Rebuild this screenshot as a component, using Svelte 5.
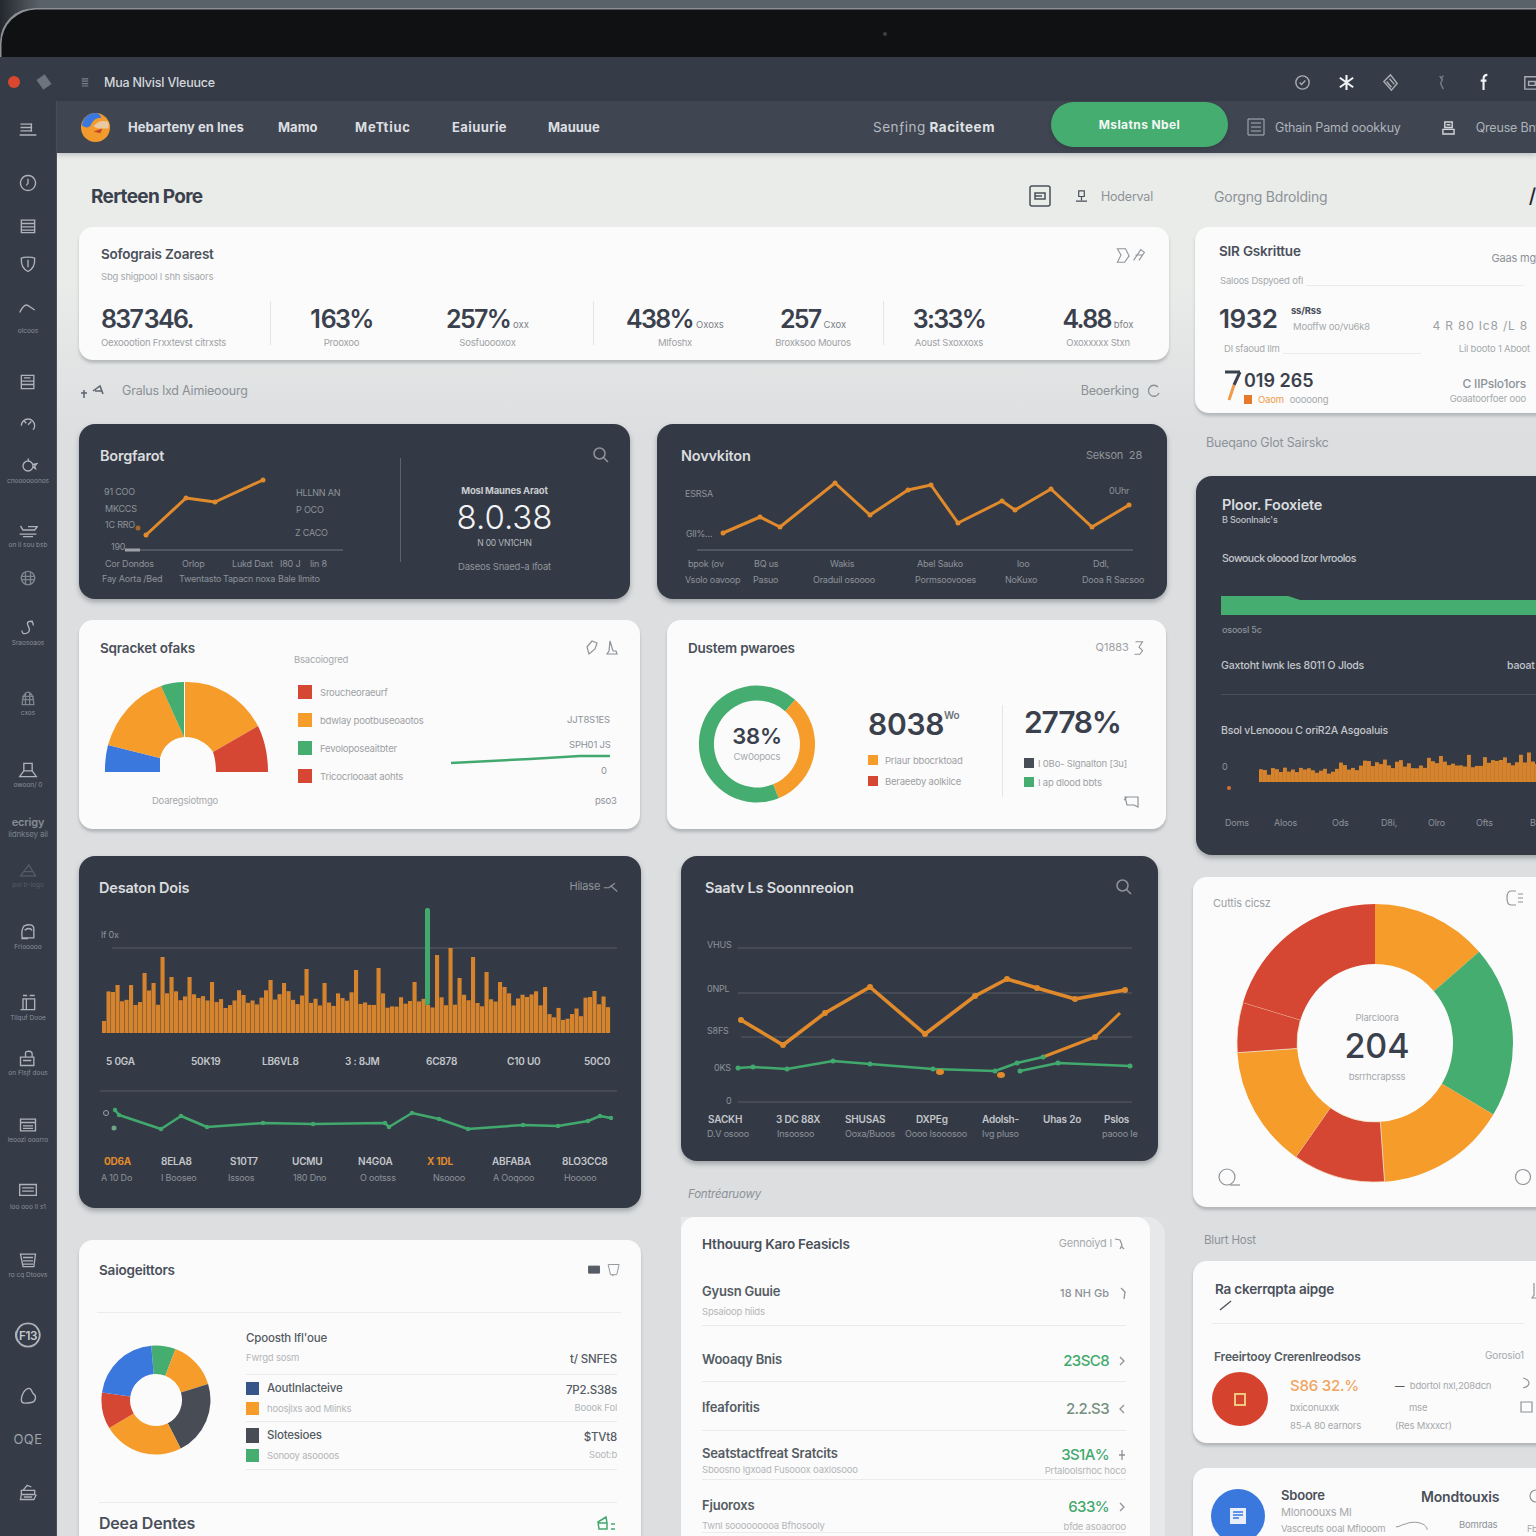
<script>
	// sidebar rail, in order from the top
	const rail = [
		{ d: 'M3 5h14M3 9h14M3 13h14M2 18h20M16 4v10' },
		{ d: 'M12 3a9 9 0 1 0 .01 0zM12 7v5l-2 3' },
		{ d: 'M4 5h16v15H4zM4 9h16M4 13h16M4 17h16' },
		{ d: 'M4 5c3-1.6 13-1.6 16 0 .5 8-2 13-8 16-6-3-8.5-8-8-16zM12 7v9' },
		{ d: 'M2 15c3-6 6-9 8-9 2 0 5 3 10 6', label: 'olcoos', low: true },
		{ d: 'M4 4h15v7H4zM4 11h15v9H4zM4 15h15M7 7h8' },
		{ d: 'M4 14a8 8 0 1 1 16 0c0 2-1 4-2 5M12 13l4-4M7 8l3 3' },
		{ d: 'M6 12a6 6 0 1 0 12 0 6 6 0 0 0-12 0zM12 3l1 3M18 10l5-1-3 3 1 3-3-2', label: 'cnoooooonos' },
		{ d: 'M3 7l3 5h14l3-4H12M2 17h20M6 20h12', label: 'on ii sou bsb' },
		{ d: 'M12 4a8 8 0 1 0 .01 0zM5 10h14M5 14h14M9 5v14M15 5v14', dim: true },
		{ d: 'M18 4c-5-1-8 1-6 5s3 7-1 9-7 0-6-3M14 4c3 0 5 2 4 5', label: 'Sraosoaos' },
		{ d: 'M5 20c0-9 3-15 7-15s7 6 7 15zM5 14h14M5 10h14M9 6v14M14 6v14', label: 'cxos', dim: true },
		{ d: 'M7 4h10v9l5 7H2l5-7zM7 13h10', label: 'owoon/ 0' },
		{ text: 'ecrigy', sub: 'lidnksey ail' },
		{ d: 'M3 19L13 6l8 13zM7 14h10', label: 'pol b-logo', faint: true },
		{ d: 'M7 5c6-3 12-2 12 3v11H5c-1-6 0-11 2-14zM4 20h8M8 10c3-3 7-3 9 0', label: 'Friooooo' },
		{ d: 'M6 7h14v13H6zM10 7v13M6 3h5M14 3h6M3 20h3', label: 'Tilquf Dooe' },
		{ d: 'M3 11h16v10H3zM9 11V6c0-3 8-3 8 1v4M6 15h10', label: 'on Flsjf dous' },
		{ d: 'M3 5h18v14H3zM3 9h18M6 13h12M6 16h12', label: 'leoozi ooorro' },
		{ d: 'M2 3h20v13H2zM5 7h14M5 11h14', label: 'loo ooo Il s1' },
		{ d: 'M3 5h18l-2 15H6zM6 9h12M6 13h12M6 17h12', label: 'ro cq Dtoovs' },
		{ d: 'M12 2a10 10 0 1 0 .01 0zM2 9c-1 4 0 7 2 9', num: 'F13' },
		{ d: 'M4 18c0-7 5-14 9-14s3 5 6 7 3 9-3 10-12 2-12-3z' },
		{ text: 'OQE' },
		{ d: 'M4 10h16v5H4zM4 15l-1 6h16l3-6M6 10l5-6 5 2M7 18h10' }
	];

	const stats = [
		{ v: '837 346.', l: 'Oexoootion Frxxtevst citrxsts', left: true },
		{ sep: true },
		{ v: '1 63%', l: 'Prooxoo' },
		{ v: '257%', s: 'oxx', l: 'Sosfuoooxox' },
		{ blank: true },
		{ sep: true },
		{ v: '438%', s: 'Oxoxs', l: 'Mlfoshx' },
		{ v: '257', s: 'Cxox', l: 'Broxksoo Mouros' },
		{ blank: true },
		{ sep: true },
		{ v: '3:33%', l: 'Aoust Sxoxxoxs' },
		{ blank: true },
		{ v: '4.88', s: 'bfox', l: 'Oxoxxxxx Stxn' }
	];

	const orange = '#e08a2c';
	const green = '#42a96e';

	const lineA = [[146, 535], [186, 498], [215, 502], [263, 480]];
	const lineB = [[723, 533], [760, 517], [780, 527], [835, 483], [870, 515], [908, 490], [931, 485], [958, 523], [1002, 501], [1015, 510], [1051, 489], [1092, 527], [1129, 505]];
	const lineE = [[115, 1110], [119, 1115], [161, 1129], [181, 1116], [207, 1127], [263, 1123], [313, 1124], [385, 1123], [389, 1127], [412, 1113], [439, 1119], [468, 1129], [523, 1125], [558, 1126], [588, 1121], [600, 1116], [611, 1118]];
	const lineF1 = [[741, 1020], [783, 1045], [825, 1013], [870, 987], [925, 1034], [975, 996], [1007, 979], [1037, 988], [1075, 999], [1125, 990]];
	const lineF2 = [[1043, 1057], [1095, 1037], [1120, 1013]];
	const lineF3 = [[738, 1068], [753, 1067], [787, 1069], [833, 1061], [870, 1064], [933, 1069], [995, 1071], [1017, 1063], [1043, 1057]];
	const lineF4 = [[1020, 1071], [1058, 1063], [1130, 1066]];

	const pts = (list) => list.map((p) => p.join(',')).join(' ');

	function rand(i) {
		const s = Math.sin(i * 12.9898) * 43758.5453;
		return s - Math.floor(s);
	}

	// tall bars of the big histogram: page x, top y
	const peaks = [[160, 957], [144, 973], [188, 977], [211, 982], [269, 980], [283, 983], [304, 969], [324, 983], [353, 970], [378, 968], [414, 982], [435, 955], [447, 948], [472, 957], [484, 972], [498, 982], [523, 997], [542, 987], [588, 997], [609, 982], [110, 992], [115, 985], [131, 985], [152, 983], [169, 977], [458, 978], [504, 987]];
	const barsE = [];
	for (let i = 0; i < 113; i++) {
		const x = 102 + i * 4.5;
		let h = 25 + rand(i) * 18;
		if (x > 540 && x < 580) h = 12 + rand(i) * 14;
		if (i === 0) h = 12;
		for (const p of peaks) if (Math.abs(p[0] - x) < 2.3) h = 1033 - p[1];
		barsE.push({ x, h });
	}
	const barsJ = [];
	for (let i = 3; i < 73; i++) {
		const x = 1247 + i * 4;
		barsJ.push({ x, h: 5 + i * 0.17 + rand(i + 7) * (7 + i * 0.16) });
	}

	function sector(cx, cy, rx, ry, irx, iry, a0, a1) {
		const p = (a, x, y) => {
			const t = ((a - 90) * Math.PI) / 180;
			return `${(cx + x * Math.cos(t)).toFixed(1)} ${(cy + y * Math.sin(t)).toFixed(1)}`;
		};
		const big = a1 - a0 > 180 ? 1 : 0;
		return `M${p(a0, rx, ry)}A${rx} ${ry} 0 ${big} 1 ${p(a1, rx, ry)}L${p(a1, irx, iry)}A${irx} ${iry} 0 ${big} 0 ${p(a0, irx, iry)}Z`;
	}

	const c = { o: '#f59c2a', r: '#d64733', g: '#45ad70', b: '#3a78de', d: '#474c55' };
	const donutD = [[0, 41, c.g], [41, 158, c.o], [158, 360, c.g]];
	const donutG = [[-5, 21, c.g], [21, 73, c.o], [73, 153, c.d], [153, 239, c.o], [239, 278, c.r], [278, 355, c.b]];
	const donutK = [[0, 49, c.o], [49, 121, c.g], [121, 176, c.o], [176, 215, c.r], [215, 266, c.o], [266, 287, c.r], [287, 360, c.r]];

	const legendC = [
		[c.r, 'Sroucheoraeurf'],
		[c.o, 'bdwlay pootbuseoaotos'],
		[c.g, 'Fevoloposeaitbter'],
		[c.r, 'Tricocrlooaat aohts']
	];

	const rows = [
		{ t: 'Gyusn Guuie', s: 'Spsaioop hiids', v: '18 NH Gb', plain: true, ch: 'M3 1l4 4-1 7', h: 60, pt: 16, sg: 6 },
		{ t: 'Wooaqy Bnis', v: '23SC8', ch: 'M2 2l4 4-4 4', h: 56, pt: 24 },
		{ t: 'lfeaforitis', v: '2.2.S3', muted: true, ch: 'M6 2L2 6l4 4', h: 49, pt: 16 },
		{ t: 'Seatstactfreat Sratcits', s: 'Sboosno lgxoad Fusooox oaxlosooo', v: '3S1A%', vs: 'Prtaloolsrhoc hoco', ch: 'M4 1v10M1 6h6', h: 49, pt: 13, sg: 2 },
		{ t: 'Fjuoroxs', s: 'Twnl sooooooooa Bfhosooly', v: '633%', vs: 'bfde asoaoroo', ch: 'M2 2l4 4-4 4', h: 53, pt: 16, sg: 6 }
	];
</script>

{#snippet labels(list, cls)}
	{#each list as [x, y, t]}
		<text {x} {y} class={cls}>{t}</text>
	{/each}
{/snippet}

{#snippet loupe()}
	<svg class="ico" viewBox="0 0 18 18"><circle cx="7.5" cy="7.5" r="5.5" /><path d="M11.5 11.5L16 16" /></svg>
{/snippet}

<div class="page">
	<div class="bezel">
		<div class="glass"><i class="cam"></i></div>
	</div>

	<div class="titlebar">
		<i class="dot"></i>
		<i class="chip"></i>
		<svg class="tb-ic" viewBox="0 0 10 12"><path d="M1 2h8M1 5h8M1 8h8M1 11h8" /></svg>
		<span class="tb-title">Mua Nlvisl Vleuuce</span>
		<div class="tb-right">
			<svg viewBox="0 0 20 20"><circle cx="10" cy="10" r="7" /><path d="M7 10l2 2 4-4" /></svg>
			<svg class="bright" viewBox="0 0 20 20"><path d="M10 2v16M3 5l14 10M17 5L3 15" /></svg>
			<svg viewBox="0 0 20 20"><path d="M3 9l7-7 7 9-6 7zM6 9l5 6M9 6l5 6" /></svg>
			<svg class="dimmer" viewBox="0 0 20 20"><path d="M8 3l3 4-2 4 3 6M12 3l-3 3" /></svg>
			<svg class="bright" viewBox="0 0 20 20"><path d="M13 2c-3 0-4 1-4 4v12M6 8h6" /></svg>
			<svg viewBox="0 0 20 20"><path d="M4 4h14v13H4zM8 9h7v4H8z" /></svg>
		</div>
	</div>

	<div class="shell">
		<aside class="rail">
			{#each rail as it}
				<div class="rail-item" class:dim={it.dim} class:faint={it.faint} class:low={it.low}>
					{#if it.text}
						<span class="rail-text" class:oqe={!it.sub}>{it.text}</span>
						{#if it.sub}<span class="rail-sub">{it.sub}</span>{/if}
					{:else}
						<svg viewBox="0 0 24 24" class:big={it.num}>
							<path d={it.d} />
							{#if it.num}<text x="12" y="16" class="rail-num">{it.num}</text>{/if}
						</svg>
						{#if it.label}<span class="rail-label">{it.label}</span>{/if}
					{/if}
				</div>
			{/each}
		</aside>

		<div class="main">
			<nav class="nav">
				<svg class="logo" viewBox="0 0 32 32">
					<circle cx="16" cy="16" r="15" fill="#f29a2c" />
					<path d="M2 14C3 5 10 1 16 1c3 0 5 2 6 5-6 0-9 3-11 8-3 3-6 2-9 0z" fill="#3a78de" />
					<path d="M14 15c3-5 8-7 15-5 1 3 1 5 0 7-6 0-10 1-15-2z" fill="#e9c9a0" />
					<path d="M14 20l9-3-2 5z" fill="#c4452f" />
				</svg>
				<span class="brand">Hebarteny en Ines</span>
				<a class="link l1">Mamo</a>
				<a class="link l2">MeTtiuc</a>
				<a class="link l3">Eaiuurie</a>
				<a class="link l4">Mauuue</a>
				<span class="nav-mid"><em>Senƒing</em> Raciteem</span>
				<button class="pill">Mslatns Nbel</button>
				<svg class="nav-ic" viewBox="0 0 18 18"><path d="M1 1h16v16H1zM4 5h10M4 9h10M4 13h10" /></svg>
				<span class="nav-txt">Gthain Pamd oookkuy</span>
				<svg class="nav-ic2" viewBox="0 0 14 16"><path d="M3 2h8v6H3zM1 10h12v5H1zM5 5h4" /></svg>
				<span class="nav-txt last">Qreuse Bnt</span>
			</nav>

			<div class="content">
				<div class="left">
					<header class="head">
						<h1>Rerteen Pore</h1>
						<svg class="box-ic" viewBox="0 0 22 22"><rect x="1" y="1" width="20" height="20" rx="2" /><path d="M6 8h10v6H6zM6 11h7" /></svg>
						<svg class="usr-ic" viewBox="0 0 14 14"><path d="M4 1h6v6H4zM7 7v4M1 12h12" /></svg>
						<span class="head-txt">Hoderval</span>
					</header>

					<section class="card summary">
						<div class="sum-top">
							<div>
								<h3>Sofograis Zoarest</h3>
								<p class="sub">Sbg shigpool I shh sisaors</p>
							</div>
							<svg class="ico-light" viewBox="0 0 36 20"><path d="M4 3h9l4 8-5 7H4l4-8zM22 16l8-12 4 3-6 9M24 10h8" /></svg>
						</div>
						<div class="stats">
							{#each stats as s}
								{#if s.sep}
									<i class="sep"></i>
								{:else if s.blank}
									<i></i>
								{:else}
									<div class="stat" class:lft={s.left}>
										<div class="val">{s.v}{#if s.s}<small>{s.s}</small>{/if}</div>
										<div class="lbl">{s.l}</div>
									</div>
								{/if}
							{/each}
						</div>
					</section>

					<div class="status">
						<svg class="st-ic" viewBox="0 0 30 16"><path d="M2 10h6M5 7v8M14 8l7-5 3 8M16 8h7" /></svg>
						<span>Gralus lxd Aimieoourg</span>
						<span class="st-right">Beoerking</span>
						<svg class="st-ref" viewBox="0 0 14 14"><path d="M11 3A5.500 5.500 0 1 0 12 9" /></svg>
					</div>

					<div class="row r1">
						<section class="dark a">
							<div class="dk-head">
								<h3>Borgfarot</h3>
								{@render loupe()}
							</div>
							<div class="a-body">
								<svg class="chart" width="321" height="125" viewBox="79 474 321 125">
									<line x1="125" y1="550" x2="343" y2="550" class="axis" />
									<line x1="125" y1="550" x2="140" y2="550" class="tick" />
									<polyline points={pts(lineA)} class="ol" />
									{#each lineA as p}<circle cx={p[0]} cy={p[1]} r="2.500" fill={orange} />{/each}
									<circle cx="138" cy="528" r="2.500" fill="#a5662c" />
									{@render labels([[104, 495, '91 COO'], [105, 512, 'MKCCS'], [105, 528, '1C RRO'], [111, 550, '190'], [296, 496, 'HLLNN AN'], [296, 513, 'P OCO'], [295, 536, 'Z CACO']], 'tk')}
									{@render labels([[105, 567, 'Cor Dondos'], [182, 567, 'Orlop'], [232, 567, 'Lukd Daxt'], [280, 567, 'I80 J'], [310, 567, 'lin 8'], [102, 582, 'Fay Aorta /Bed'], [179, 582, 'Twentasto'], [223, 582, 'Tapacn noxa'], [278, 582, 'Bale Ilmito']], 'tk')}
								</svg>
								<div class="a-num">
									<b>Mosl Maunes Araot</b>
									<strong>8.0.38</strong>
									<span>N 00 VN1CHN</span>
									<em>Daseos Snaed-a Ifoat</em>
								</div>
							</div>
						</section>

						<section class="dark b">
							<div class="dk-head wide">
								<h3>Novvkiton</h3>
								<span class="dk-right">Sekson  28</span>
							</div>
							<svg class="chart" width="510" height="125" viewBox="657 474 510 125">
								<line x1="697" y1="550" x2="1133" y2="550" class="axis" />
								<polyline points={pts(lineB)} class="ol" />
								{#each lineB as p}<circle cx={p[0]} cy={p[1]} r="2.500" fill={orange} />{/each}
								{@render labels([[685, 497, 'ESRSA'], [686, 537, 'Gll%...'], [1109, 494, '0Uhr']], 'tk')}
								{@render labels([[688, 567, 'bpok  (ov'], [754, 567, 'BQ us'], [830, 567, 'Wakis'], [917, 567, 'Abel Sauko'], [1017, 567, 'loo'], [1093, 567, 'Ddl,'], [685, 583, 'Vsolo oavoop'], [753, 583, 'Pasuo'], [813, 583, 'Oraduil osoooo'], [915, 583, 'Pormsoovooes'], [1005, 583, 'NoKuxo'], [1082, 583, 'Dooa R Sacsoo']], 'tk')}
							</svg>
						</section>
					</div>

					<div class="row r2">
						<section class="card c">
							<div class="wh-head">
								<h3>Sqracket ofaks</h3>
								<svg class="ico-light" viewBox="0 0 36 18"><path d="M3 8l5-6 5 2-2 6-6 5zM26 2l3 10h3l1 3h-10l2-3z" /></svg>
							</div>
							<div class="c-body">
								<div class="c-chart">
									<svg width="190" height="100" viewBox="97 678 190 100">
										<path d="M105 772A82 90 0 0 1 108 745L160 758Q160 765 160 772Z" fill={c.b} />
										<path d="M108 745A82 90 0 0 1 161 686L184 737C172 738 163 746 160 758Z" fill={c.o} />
										<path d="M161 686Q172 682 184 682L184 737Z" fill={c.g} />
										<path d="M185 682A82 90 0 0 1 258 726L213 752C207 743 197 737 185 737Z" fill={c.o} />
										<path d="M258 726C265 740 268 756 268 772L216 772C216 765 215 758 213 752Z" fill={c.r} />
									</svg>
									<span class="c-cap">Doaregsiotmgo</span>
								</div>
								<div class="c-legend">
									<span class="sub tag">Bsacoiogred</span>
									{#each legendC as [col, t]}
										<div class="leg"><i style="background:{col}"></i>{t}</div>
									{/each}
								</div>
								<svg class="c-side" width="190" height="120" viewBox="440 700 190 120">
									<line x1="451" y1="763" x2="530" y2="759" stroke={green} stroke-width="2.500" />
									<polyline points="530,759 580,756 610,756" fill="none" stroke={green} stroke-width="2.500" />
									{@render labels([[567, 723, 'JJT8S1ES'], [569, 748, 'SPH01 JS'], [601, 774, '0'], [595, 804, 'pso3']], 'tkl')}
								</svg>
							</div>
						</section>

						<section class="card d">
							<div class="wh-head">
								<h3>Dustem pwaroes</h3>
								<span class="d-right">Q1883 <svg class="ico-light sm" viewBox="0 0 14 18"><path d="M3 2h8l-4 6 4 4-3 4H2" /></svg></span>
							</div>
							<div class="d-body">
								<div class="d-ring">
									<svg width="118" height="118" viewBox="698 684.500 118 118">
										{#each donutD as [a0, a1, col]}
											<path d={sector(757, 743.5, 58, 58.5, 43, 43.5, a0, a1)} fill={col} />
										{/each}
									</svg>
									<div class="d-center"><b>38%</b><span>Cw0opocs</span></div>
								</div>
								<div class="d-col one">
									<div class="big">8038<sup>Wo</sup></div>
									<div class="leg2"><i style="background:{c.o}"></i>Prlaur bbocrktoad</div>
									<div class="leg2"><i style="background:{c.r}"></i>Beraeeby aolkilce</div>
								</div>
								<div class="d-col two">
									<div class="big">2778%</div>
									<div class="leg2"><i style="background:#474c55"></i>I 0Bo- Slgnalton [3u]</div>
									<div class="leg2"><i style="background:{c.g}"></i>I ap dlood bbts</div>
								</div>
							</div>
							<svg class="d-foot ico-light" viewBox="0 0 20 16"><path d="M3 3h13v10l-4-2H5zM2 6l3-3" /></svg>
						</section>
					</div>

					<div class="lower">
						<div class="col-e">
							<section class="dark e">
								<div class="dk-head tight">
									<h3>Desaton Dois</h3>
									<span class="dk-right">Hilase <svg class="ico" viewBox="0 0 24 14"><path d="M1 8h7l8-6M10 5l9 8" /></svg></span>
								</div>
								<svg class="chart" width="562" height="302" viewBox="79 906 562 302">
									<line x1="112" y1="948" x2="617" y2="948" class="grid" />
									{#each barsE as b}
										<rect x={b.x} y={1033 - b.h} width="4.100" height={b.h} fill="#d6832d" />
									{/each}
									<rect x="425" y="908" width="5" height="97" rx="2" fill={green} />
									<line x1="100" y1="1091" x2="617" y2="1091" class="grid" />
									<polyline points={pts(lineE)} class="gl" />
									{#each lineE as p}<circle cx={p[0]} cy={p[1]} r="2.200" fill={green} />{/each}
									<circle cx="114" cy="1128" r="2.500" fill="#6fa488" />
									<circle cx="106" cy="1113" r="2.500" fill="none" stroke="#9ba1a8" />
									{@render labels([[101, 938, 'lf 0x']], 'tk')}
									{@render labels([[106, 1065, '5 0GA'], [191, 1065, '50K19'], [262, 1065, 'LB6VL8'], [345, 1065, '3 : 8JM'], [426, 1065, '6C878'], [507, 1065, 'C10 U0'], [584, 1065, '50C0']], 'tkb')}
									{@render labels([[161, 1165, '8ELA8'], [230, 1165, 'S10T7'], [292, 1165, 'UCMU'], [358, 1165, 'N4G0A'], [492, 1165, 'ABFABA'], [562, 1165, '8LO3CC8']], 'tkb')}
									{@render labels([[104, 1165, '0D6A'], [427, 1165, 'X 1DL']], 'tko')}
									{@render labels([[101, 1181, 'A 10 Do'], [161, 1181, 'I Booseo'], [228, 1181, 'Issoos'], [293, 1181, '180 Dno'], [360, 1181, 'O ootsss'], [433, 1181, 'Nsoooo'], [493, 1181, 'A Ooqooo'], [564, 1181, 'Hooooo']], 'tk')}
								</svg>
							</section>

							<section class="card g">
								<div class="wh-head g-head">
									<h3>Saiogeittors</h3>
									<svg class="ico-light" viewBox="0 0 46 18"><path class="fillit" d="M2 4h14v9H2z" /><path d="M27 2h14l-3 13h-8zM33 15v2" /></svg>
								</div>
								<div class="g-body">
									<svg class="g-ring" width="110" height="110" viewBox="100.500 1344.500 110 110">
										{#each donutG as [a0, a1, col]}
											<path d={sector(155.5, 1399.5, 54.5, 54.5, 26, 26, a0, a1)} fill={col} />
										{/each}
									</svg>
									<div class="g-list">
										<div class="g-row first">
											<div><b>Cpoosth Ifl'oue</b><em>Fwrgd sosm</em></div>
											<strong>t/ SNFES</strong>
										</div>
										<div class="g-row">
											<div>
												<b class="sq"><i style="background:#38558a"></i>Aoutlnlacteive</b>
												<em class="sq"><i style="background:{c.o}"></i>hoosjlxs aod Mlinks</em>
											</div>
											<div class="g-val"><strong>7P2.S38s</strong><em>Boook Fol</em></div>
										</div>
										<div class="g-row">
											<div>
												<b class="sq big-sq"><i style="background:#474c55"></i>Slotesioes</b>
												<em class="sq"><i style="background:{c.g}"></i>Sonooy asoooos</em>
											</div>
											<div class="g-val"><strong>$TVt8</strong><em>Soot:b</em></div>
										</div>
									</div>
								</div>
								<div class="g-foot">
									<h2>Deea Dentes</h2>
									<svg class="g-ic" viewBox="0 0 20 16"><path d="M1 7l8-5 1 6v6H2zM1 8h9M14 9h4M14 14h4" /></svg>
								</div>
							</section>
						</div>

						<div class="col-f">
							<section class="dark f">
								<div class="dk-head wide">
									<h3>Saatv Ls Soonnreoion</h3>
									{@render loupe()}
								</div>
								<svg class="chart" width="477" height="255" viewBox="681 906 477 255">
									<line x1="738" y1="948" x2="1132" y2="948" class="grid" />
									<line x1="738" y1="993" x2="1132" y2="993" class="grid" />
									<line x1="741" y1="1037" x2="1132" y2="1037" class="grid" />
									<line x1="738" y1="1102" x2="1132" y2="1102" class="grid" />
									<polyline points={pts(lineF1)} class="ol thick" />
									{#each lineF1 as p}<circle cx={p[0]} cy={p[1]} r="3" fill={orange} />{/each}
									<polyline points={pts(lineF3)} class="gl" />
									<polyline points={pts(lineF2)} class="ol" />
									<polyline points={pts(lineF4)} class="gl" />
									{#each [...lineF3, ...lineF4] as p}<circle cx={p[0]} cy={p[1]} r="2.500" fill={green} />{/each}
									<ellipse cx="940" cy="1072" rx="4" ry="3" fill={orange} />
									<ellipse cx="1001" cy="1075" rx="4" ry="3" fill={orange} />
									<circle cx="1095" cy="1037" r="3" fill={orange} />
									{@render labels([[707, 948, 'VHUS'], [707, 992, '0NPL'], [707, 1034, 'S8FS'], [714, 1071, '0KS'], [726, 1104, '0']], 'tk')}
									{@render labels([[708, 1123, 'SACKH'], [776, 1123, '3 DC 88X'], [845, 1123, 'SHUSAS'], [916, 1123, 'DXPEg'], [982, 1123, 'Adolsh-'], [1043, 1123, 'Uhas 2o'], [1104, 1123, 'Pslos']], 'tkb')}
									{@render labels([[707, 1137, 'D.V osooo'], [777, 1137, 'Insoosoo'], [845, 1137, 'Ooxa/Buoos'], [905, 1137, 'Oooo Isooosoo'], [982, 1137, 'Ivg pluso'], [1102, 1137, 'paooo Ie']], 'tk')}
								</svg>
							</section>

							<div class="label-f">Fontréaruowy</div>

							<section class="h-wrap">
								<div class="card h">
									<div class="h-head">
										<h3>Hthouurg Karo Feasicls</h3>
										<span>Gennoiyd l<svg class="ico-light sm" viewBox="0 0 14 14"><path d="M3 2l5 1 2 5-2 4M9 9l3 3" /></svg></span>
									</div>
									{#each rows as r}
										<div class="h-row" style="height:{r.h}px;padding-top:{r.pt}px">
											<div>
												<b>{r.t}</b>
												{#if r.s}<em style="margin-top:{r.sg}px">{r.s}</em>{/if}
											</div>
											<div class="h-val">
												<span class="hv" class:plain={r.plain} class:muted={r.muted}>{r.v}<svg viewBox="0 0 8 13"><path d={r.ch} /></svg></span>
												{#if r.vs}<em style="margin-top:{r.sg - 2}px">{r.vs}</em>{/if}
											</div>
										</div>
									{/each}
								</div>
							</section>
						</div>
					</div>
				</div>

				<div class="right">
					<header class="head rhead">
						<span>Gorgng Bdrolding</span>
						<b>/</b>
					</header>

					<section class="card i">
						<div class="i-top">
							<h3>SIR Gskrittue</h3>
							<span class="i-tr">Gaas mg</span>
						</div>
						<div class="i-line sub">Saloos Dspyoed ofl<i></i></div>
						<div class="i-mid">
							<strong>1932</strong>
							<div><b>ss/Rss</b><span>Mooffw oo/vu6k8</span></div>
							<em>4 R 80 Ic8 /L 8</em>
						</div>
						<div class="i-line sub two">Dl sfaoud llm<i></i><span>Lil booto 1 Aboot</span></div>
						<div class="i-bot">
							<div class="i-seven">
								<svg width="18" height="34" viewBox="0 0 18 34"><path d="M1 4h15" stroke="#3a414d" /><path d="M16 4L10 17" stroke="#3a414d" /><path d="M10 17L5 32" stroke="#f09a4a" /></svg>
								<div>
									<strong>019 265</strong>
									<p><i></i><u>Oaom</u> ooooong</p>
								</div>
							</div>
							<div class="i-r"><b>C IIPslo1ors</b><span>Goaatoorfoer ooo</span></div>
						</div>
					</section>

					<div class="r-label">Bueqano Glot Sairskc</div>

					<section class="dark j">
						<h3>Ploor. Fooxiete</h3>
						<p class="j-sub">B Soonlnalc's</p>
						<p class="j-t first">Sowouck oloood Izor lvroolos</p>
						<div class="j-bar"><i></i></div>
						<p class="j-sub two">osoosl 5c</p>
						<div class="j-rowt"><p class="j-t">Gaxtoht lwnk les 8011 O Jlods</p><p class="j-t rt">baoat</p></div>
						<p class="j-t three">Bsol vLenooou C oriR2A Asgoaluis</p>
						<svg class="chart" width="340" height="104" viewBox="1196 750 340 104">
							{#each barsJ as b}
								<rect x={b.x} y={782 - b.h} width="3.900" height={b.h} fill="#d6832d" />
							{/each}
							<circle cx="1229" cy="788" r="2" fill="#d6702d" />
							{@render labels([[1222, 770, '0']], 'tk')}
							{@render labels([[1225, 826, 'Doms'], [1274, 826, 'Aloos'], [1332, 826, 'Ods'], [1381, 826, 'D8i,'], [1428, 826, 'Olro'], [1476, 826, 'Ofts'], [1530, 826, 'B']], 'tk')}
						</svg>
					</section>

					<section class="card k">
						<div class="k-top">
							<span>Cuttis cicsz</span>
							<svg class="ico-light" viewBox="0 0 30 18"><path d="M10 2H5C2 2 1 5 1 9s1 7 4 7h5M12 5h5M12 9h5M12 13h5" /></svg>
						</div>
						<div class="k-ring">
							<svg width="290" height="290" viewBox="1231 898 290 290">
								{#each donutK as [a0, a1, col]}
									<path d={sector(1375, 1043, 138, 139, 78, 79, a0, a1)} fill={col} stroke="#f3e3c8" stroke-width={a1 === 287 || a0 === 176 ? 0.8 : 0} />
								{/each}
							</svg>
							<div class="k-center">
								<span>Plarcloora</span>
								<strong>204</strong>
								<span>bsrrhcrapsss</span>
							</div>
						</div>
						<div class="k-foot">
							<svg class="ico-light lg" viewBox="0 0 26 20"><circle cx="11" cy="10" r="8" /><path d="M14 18h10" /></svg>
							<svg class="ico-light lg" viewBox="0 0 20 20"><circle cx="10" cy="10" r="7.500" /></svg>
						</div>
					</section>

					<div class="r-label hh">Blurt Host</div>

					<section class="card l">
						<div class="l-top">
							<h3>Ra ckerrqpta aipge</h3>
							<svg class="ico-light" viewBox="0 0 16 18"><path d="M3 2v12l-2 3h12M6 2h8" /></svg>
						</div>
						<svg class="l-tick" viewBox="0 0 14 12"><path d="M1 11l11-9" /></svg>
						<div class="l-head">
							<b>Freeirtooy Crerenlreodsos</b>
							<span>Gorosio1</span>
						</div>
						<div class="l-body">
							<div class="l-dot"><i></i></div>
							<div class="l-a">
								<strong>S86 32.%</strong>
								<em>bxiconuxxk</em>
								<em>85-A 80 earnors</em>
							</div>
							<div class="l-b">
								<span><b>—</b> bdortol nxl,208dcn</span>
								<em class="ctr">mse</em>
								<em>(Res Mxxxcr)</em>
							</div>
							<div class="l-c">
								<svg class="ico-light" viewBox="0 0 10 14"><path d="M2 2c4 1 6 3 6 5s-2 4-6 5" /></svg>
								<svg class="ico-light" viewBox="0 0 14 14"><path d="M2 2h11v10H2z" /></svg>
							</div>
						</div>
					</section>

					<section class="card m">
						<div class="m-dot">
							<svg viewBox="0 0 20 18"><path d="M2 1h16v16H2z" fill="#e8eefb" /><path d="M5 5h10M5 8h10M5 11h6" stroke="#3a78de" fill="none" stroke-width="1.500" /></svg>
						</div>
						<div class="m-a">
							<b>Sboore</b>
							<span>Mlonoouxs Ml</span>
							<em>Vascreuts ooal Mflooom</em>
						</div>
						<div class="m-b">
							<b>Mondtouxis</b>
							<div class="m-sq">
								<svg viewBox="0 0 40 10"><path d="M1 7c5 0 6-3 10-3 4-2 12-3 18 0 3 1 4 3 5 6" /></svg>
								<em>Bomrdas</em>
							</div>
						</div>
						<div class="m-c">
							<svg class="ico-light" viewBox="0 0 14 14"><circle cx="9" cy="7" r="6" /></svg>
							<em>Fb</em>
						</div>
					</section>
				</div>
			</div>
		</div>
	</div>
</div>

<style>
	:global(body) {
		margin: 0;
		background: #353c48;
	}

	.page {
		width: 1536px;
		height: 1536px;
		overflow: hidden;
		display: flex;
		flex-direction: column;
		font-family: Inter, 'Noto Sans', sans-serif;
		color: #3a414d;
		letter-spacing: -0.2px;
	}

	h1, h2, h3, p { margin: 0; }
	em { font-style: normal; }

	/* device frame */
	.bezel {
		height: 57px;
		flex-shrink: 0;
		background: linear-gradient(90deg, #24282c 0, #5a6269 40px);
		padding-top: 8px;
		box-sizing: border-box;
	}

	.glass {
		height: 49px;
		background: #101112;
		border-top-left-radius: 34px;
		box-shadow: inset 2px 2px 0 -0.5px #8b9096;
		display: flex;
		justify-content: center;
		align-items: center;
	}

	.cam {
		width: 4px;
		height: 4px;
		border-radius: 50%;
		background: #3c4046;
		margin: 2px 0 0 234px;
	}

	.titlebar {
		height: 44px;
		flex-shrink: 0;
		background: #353c48;
		display: flex;
		align-items: center;
		padding: 6px 0 0 8px;
		box-sizing: border-box;
	}

	.dot {
		width: 12px;
		height: 12px;
		border-radius: 50%;
		background: #d9472f;
	}

	.chip {
		width: 10px;
		height: 12px;
		background: #6e747d;
		transform: rotate(-35deg);
		margin-left: 19px;
	}

	.tb-ic {
		width: 8px;
		height: 10px;
		margin-left: 32px;
		fill: none;
		stroke: #7c828b;
		stroke-width: 1.500;
	}

	.tb-title {
		margin-left: 15px;
		font-size: 12.500px;
		font-weight: 500;
		color: #d4d7db;
	}

	.tb-right {
		margin-left: auto;
		margin-right: -4px;
		display: flex;
		align-items: center;
	}

	.tb-right svg {
		width: 19px;
		height: 19px;
		fill: none;
		stroke: #a8adb3;
		stroke-width: 1.500;
		margin-left: 25px;
	}

	.tb-right svg:nth-child(4) { margin-left: 32px; }
	.tb-right svg:nth-child(5) { margin-left: 24px; }
	.tb-right svg:nth-child(6) { margin-left: 27px; }

	.tb-right svg.bright { stroke: #f2f3f4; stroke-width: 2.200; }
	.tb-right svg.dimmer { stroke: #767c85; }

	.shell {
		flex: 1;
		display: flex;
		min-height: 0;
	}

	/* sidebar */
	.rail {
		width: 57px;
		flex-shrink: 0;
		background: #353c48;
		border-right: 1px solid #4a505a;
		box-sizing: border-box;
		padding-top: 19px;
		display: grid;
		grid-template-columns: 56px;
		grid-template-rows: 53px 43px 38px 46px 72px 42px 42px 64px 48px 50px 70px 72px 52px 48px 62px 71px 55px 67px 67px 68px 75px 60px 43px 54px 44px;
		color: #aeb3b9;
		overflow: hidden;
	}

	.rail-item {
		display: flex;
		flex-direction: column;
		align-items: center;
		min-width: 0;
	}

	.rail-item svg {
		width: 20px;
		height: 20px;
		flex-shrink: 0;
		fill: none;
		stroke: currentColor;
		stroke-width: 1.600;
	}

	.rail-item svg.big {
		width: 28px;
		height: 28px;
		margin-top: -4px;
	}

	.rail-item.dim { color: #7f858d; }
	.rail-item.faint { color: #555c67; }
	.rail-item.low .rail-label { margin-top: 7px; }

	.rail-label {
		font-size: 6.500px;
		color: #8a9098;
		white-space: nowrap;
		letter-spacing: 0;
		margin-top: 1px;
	}

	.rail-item.faint .rail-label { color: #555c67; }

	.rail-text {
		font-size: 11px;
		white-space: nowrap;
		margin-top: 3px;
		color: #868c94;
		font-weight: 600;
	}

	.rail-text.oqe {
		font-size: 13px;
		font-weight: 400;
		color: #9ea3aa;
		letter-spacing: 0.5px;
	}

	.rail-sub {
		font-size: 8px;
		color: #7c828b;
		white-space: nowrap;
	}

	.rail-num {
		font-size: 10px;
		text-anchor: middle;
		fill: #c5c9ce;
		stroke: none;
		font-weight: 600;
	}

	.main {
		flex: 1;
		min-width: 0;
		display: flex;
		flex-direction: column;
		position: relative;
	}

	/* nav */
	.nav {
		height: 52px;
		flex-shrink: 0;
		background: #3f4652;
		display: flex;
		align-items: center;
		padding-left: 23px;
		white-space: nowrap;
		box-shadow: 0 2px 5px rgba(60, 65, 72, 0.25);
		z-index: 1;
		overflow: hidden;
	}

	.nav > * { flex-shrink: 0; }

	.logo { width: 31px; height: 31px; }

	.brand, .link {
		font-size: 13px;
		font-weight: 700;
		color: #dcdee1;
		letter-spacing: 0;
	}

	.brand { margin-left: 17px; width: 150px; }
	.l1 { width: 77px; }
	.l2 { width: 97px; letter-spacing: 0.8px; }
	.l3 { width: 96px; letter-spacing: 0.4px; }
	.l4 { width: 325px; }

	.nav-mid {
		font-size: 13.500px;
		font-weight: 700;
		color: #dfe1e3;
		width: 178px;
		letter-spacing: 0.5px;
	}

	.nav-mid em { font-weight: 400; color: #b6bac0; }

	.pill {
		width: 177px;
		height: 45px;
		margin-top: -6px;
		border: none;
		border-radius: 23px;
		background: #45ad70;
		color: #f3f7f4;
		font: 700 12px Inter, sans-serif;
		letter-spacing: 0.4px;
		box-shadow: 0 2px 4px rgba(30, 40, 40, 0.3);
	}

	.nav-ic {
		width: 18px;
		height: 18px;
		margin-left: 19px;
		fill: none;
		stroke: #aeb3b9;
	}

	.nav-ic2 {
		width: 13px;
		height: 15px;
		margin-left: 41px;
		fill: none;
		stroke: #d3d6da;
		stroke-width: 1.500;
	}

	.nav-txt {
		font-size: 12.500px;
		color: #aeb3b9;
		margin-left: 10px;
	}

	.nav-txt.last { margin-left: 21px; }

	.content {
		flex: 1;
		min-height: 0;
		display: flex;
		gap: 24px;
		padding-left: 22px;
		background: linear-gradient(#eaecea 0, #eaecea 130px, #dcdee0 280px);
		overflow: hidden;
	}

	.left {
		width: 1090px;
		flex-shrink: 0;
	}

	.right {
		width: 400px;
		flex-shrink: 0;
	}

	.head {
		height: 74px;
		display: flex;
		align-items: center;
		box-sizing: border-box;
		padding-top: 12px;
	}

	.head h1 {
		font-size: 19px;
		font-weight: 700;
		margin-left: 12px;
		letter-spacing: -0.7px;
	}

	.box-ic {
		width: 22px;
		height: 22px;
		margin-left: auto;
		fill: none;
		stroke: #4a505a;
		stroke-width: 1.500;
	}

	.usr-ic {
		width: 13px;
		height: 13px;
		margin-left: 24px;
		fill: none;
		stroke: #4a505a;
		stroke-width: 1.300;
	}

	.head-txt {
		font-size: 12.500px;
		color: #8d9298;
		margin: 0 16px 0 13px;
	}

	.rhead {
		font-size: 14px;
		color: #8d9298;
		padding-left: 21px;
		justify-content: space-between;
		width: 343px;
	}

	.rhead b { color: #23272d; font-size: 20px; font-weight: 500; }

	/* cards */
	.card {
		background: #fbfbfb;
		border-radius: 14px;
		box-shadow: 0 3px 3px rgba(120, 125, 130, 0.4);
		box-sizing: border-box;
	}

	.dark {
		background: #343a45;
		border-radius: 16px;
		box-shadow: 0 3px 5px rgba(90, 95, 100, 0.45);
		color: #dadcdf;
		box-sizing: border-box;
		overflow: hidden;
	}

	.card h3 {
		font-size: 13.500px;
		font-weight: 600;
		color: #4a505a;
	}

	.dark h3 {
		font-size: 14.500px;
		font-weight: 600;
		color: #dadcdf;
	}

	.sub {
		font-size: 9.500px;
		color: #a5a9ac;
		white-space: nowrap;
	}

	.ico {
		width: 18px;
		height: 18px;
		fill: none;
		stroke: #8f949b;
		stroke-width: 1.500;
		vertical-align: middle;
	}

	.ico-light {
		height: 18px;
		width: 36px;
		fill: none;
		stroke: #8e9398;
		stroke-width: 1.200;
		flex-shrink: 0;
	}

	.ico-light.sm { width: 14px; height: 16px; vertical-align: middle; }
	.ico-light .fillit { fill: #575d66; stroke: #575d66; }

	.chart { display: block; }

	.chart line.axis { stroke: #5d636d; stroke-width: 1.500; }
	.chart line.tick { stroke: #9da2a8; stroke-width: 3; }
	.chart line.grid { stroke: #4b515b; stroke-width: 1.500; }

	.ol {
		fill: none;
		stroke: #e08a2c;
		stroke-width: 3;
		stroke-linejoin: round;
	}

	.ol.thick { stroke-width: 3.600; }

	.gl {
		fill: none;
		stroke: #42a96e;
		stroke-width: 2.500;
		stroke-linejoin: round;
	}

	.tk { font-size: 9px; fill: #8d929a; }
	.tkb { font-size: 10px; font-weight: 600; fill: #c3c6cb; }
	.tko { font-size: 10px; font-weight: 700; fill: #e08a2c; }
	.tkl { font-size: 9.500px; fill: #8d9298; }

	/* summary */
	.summary { height: 133px; }

	.sum-top {
		display: flex;
		justify-content: space-between;
		padding: 19px 21px 0 22px;
		height: 60px;
		box-sizing: border-box;
	}

	.sum-top .sub { margin-top: 9px; }

	.stats {
		display: grid;
		grid-template-columns: 191px 1px 141px 151px 30px 1px 162px 114px 13px 1px 130px 14px 140px;
		height: 44px;
		margin-top: 17px;
	}

	.stats i.sep { margin-top: -3px; height: 44px; }

	.stat {
		text-align: center;
		white-space: nowrap;
	}

	.stat.lft { text-align: left; padding-left: 22px; }

	.sep { background: #e3e5e6; }

	.val {
		font-size: 25px;
		line-height: 30px;
		font-weight: 600;
		color: #3a414d;
		letter-spacing: -1.700px;
		word-spacing: -3px;
	}

	.val small {
		font-size: 9.500px;
		font-weight: 400;
		color: #7c8186;
		margin-left: 3px;
		letter-spacing: 0;
		line-height: 0;
	}

	.lbl {
		font-size: 9.500px;
		color: #9da1a5;
		margin-top: 3px;
	}

	.status {
		height: 64px;
		display: flex;
		align-items: center;
		font-size: 12.500px;
		color: #8b9096;
		padding-bottom: 3px;
		box-sizing: border-box;
	}

	.st-ic {
		width: 30px;
		height: 16px;
		margin-right: 13px;
		fill: none;
		stroke: #5d636d;
		stroke-width: 1.500;
	}

	.st-right { margin-left: auto; }

	.st-ref {
		width: 14px;
		height: 14px;
		margin: 0 8px 0 8px;
		fill: none;
		stroke: #8b9096;
		stroke-width: 1.300;
	}

	.row { display: flex; }

	.r1 { gap: 27px; height: 175px; }
	.a { width: 551px; }
	.b { width: 510px; }

	.dk-head {
		height: 50px;
		display: flex;
		align-items: center;
		justify-content: space-between;
		padding: 12px 20px 0 21px;
		box-sizing: border-box;
	}

	.dk-head.wide { padding: 12px 25px 0 24px; }
	.dk-head.tight { padding-left: 20px; }

	.dk-right {
		font-size: 11px;
		color: #8f949b;
		white-space: pre;
	}

	.a-body { display: flex; }

	.a-num {
		width: 230px;
		height: 104px;
		border-left: 1px solid #5d636d;
		margin-top: -16px;
		display: flex;
		flex-direction: column;
		align-items: center;
		box-sizing: border-box;
		padding: 27px 22px 0 0;
	}

	.a-num b { font-size: 9.500px; font-weight: 700; color: #c9ccd0; }

	.a-num strong {
		font-size: 33px;
		font-weight: 300;
		color: #f2f3f4;
		line-height: 38px;
		margin-top: 2px;
		letter-spacing: 0;
	}

	.a-num span { font-size: 8.500px; color: #b3b7bc; margin-top: 2px; }
	.a-num em { font-size: 9.500px; color: #8f949b; margin-top: 13px; white-space: nowrap; }

	.r2 { gap: 27px; height: 209px; margin-top: 21px; }
	.c { width: 561px; }
	.d { width: 499px; position: relative; }

	.wh-head {
		height: 56px;
		display: flex;
		align-items: center;
		justify-content: space-between;
		padding: 0 20px 0 21px;
		box-sizing: border-box;
	}

	.c-body { display: flex; }

	.c-chart {
		width: 215px;
		display: flex;
		flex-direction: column;
		align-items: center;
		margin-top: 2px;
		padding-left: 0;
		box-sizing: border-box;
	}

	.c-chart svg { margin-left: 11px; display: block; flex-shrink: 0; }

	.c-cap {
		font-size: 9.500px;
		color: #a5a9ac;
		margin: 17px 0 0 -3px;
	}

	.c-legend { width: 146px; margin-top: -22px; }

	.tag { display: block; margin-bottom: 20px; }

	.leg {
		display: flex;
		align-items: center;
		gap: 8px;
		height: 14px;
		font-size: 9.500px;
		color: #9da1a5;
		margin: 0 0 14px 4px;
		white-space: nowrap;
	}

	.leg i {
		width: 14px;
		height: 14px;
		flex-shrink: 0;
	}

	.c-side { margin-top: 24px; margin-left: 0; flex-shrink: 0; }

	.d-right {
		font-size: 11px;
		color: #9da1a5;
		letter-spacing: 0;
	}

	.d-body { display: flex; padding-left: 31px; position: relative; }

	.d-ring {
		width: 118px;
		height: 118px;
		margin-top: 9px;
		position: relative;
	}

	.d-ring svg { display: block; }

	.d-center {
		position: absolute;
		inset: 0;
		display: flex;
		flex-direction: column;
		align-items: center;
		justify-content: center;
	}

	.d-center b { font-size: 22px; font-weight: 600; line-height: 26px; margin-top: -3px; }
	.d-center span { font-size: 9.500px; color: #a5a9ac; margin-top: 2px; }

	.d-col { margin-top: 10px; }
	.d-col.one { width: 134px; margin-left: 52px; padding-top: 0; }

	.d-col.two {
		border-left: 1px solid #e3e5e6;
		padding-left: 21px;
		height: 92px;
		margin-top: 29px;
	}

	.big {
		font-size: 30px;
		line-height: 36px;
		font-weight: 600;
		letter-spacing: -0.300px;
		margin-top: 20px;
		margin-bottom: 13px;
		white-space: nowrap;
	}

	.d-col.two .big { margin-top: -1px; margin-bottom: 18px; letter-spacing: -1.200px; }

	.big sup { font-size: 10px; color: #6c7178; vertical-align: 16px; line-height: 0; }

	.leg2 {
		display: flex;
		align-items: center;
		gap: 7px;
		height: 10px;
		font-size: 9.500px;
		color: #9da1a5;
		margin-bottom: 11px;
		white-space: nowrap;
	}

	.leg2 i { width: 10px; height: 10px; flex-shrink: 0; }
	.d-col.two .leg2 { gap: 4px; margin-bottom: 9px; }

	.d-foot {
		position: absolute;
		right: 24px;
		bottom: 19px;
		width: 20px;
		height: 16px;
	}

	.lower {
		display: flex;
		gap: 40px;
		margin-top: 27px;
		align-items: flex-start;
	}

	.col-e { width: 562px; }
	.col-f { width: 477px; }

	.e { height: 352px; }
	.f { height: 305px; }

	.g {
		margin-top: 32px;
		height: 320px;
	}

	.g-head {
		height: 72px;
		border-bottom: 0;
		padding: 0 18px 12px 20px;
		position: relative;
	}

	.g-body {
		margin: 0 20px 0 18px;
		border-top: 1px solid #e9ebec;
		display: flex;
		height: 189px;
	}

	.g-ring { margin: 32px 0 0 4px; flex-shrink: 0; }

	.g-list {
		flex: 1;
		margin: 16px 4px 0 35px;
		font-size: 12px;
	}

	.g-row {
		display: flex;
		justify-content: space-between;
		border-bottom: 1px solid #e9ebec;
		height: 47px;
		align-items: flex-start;
		box-sizing: border-box;
		padding-top: 4px;
	}

	.g-row.first {
		height: 46px;
		padding: 0;
	}

	.g-row:last-child { height: 48px; }

	.g-row > div:first-child { display: flex; flex-direction: column; }

	.g-row b {
		font-size: 11.500px;
		font-weight: 500;
		color: #555b63;
		height: 18px;
		line-height: 18px;
	}

	.g-row em {
		font-size: 9.500px;
		color: #b3b6b9;
		margin-top: 5px;
		white-space: nowrap;
	}

	.g-row.first strong { margin-top: 23px; }

	.g-row strong {
		font-size: 11.500px;
		font-weight: 500;
		color: #555b63;
		white-space: nowrap;
	}

	.g-val {
		display: flex;
		flex-direction: column;
		align-items: flex-end;
		margin-top: 4px;
	}

	.sq { display: flex; align-items: center; gap: 8px; margin-top: 0 !important; }
	.g-row .sq i { width: 13px; height: 13px; flex-shrink: 0; }
	.g-row em.sq { margin-top: 2px !important; height: 18px; }

	.big-sq i { height: 15px !important; }

	.g-foot {
		margin: 0 24px 0 20px;
		border-top: 1px solid #e9ebec;
		height: 40px;
		display: flex;
		justify-content: space-between;
		align-items: center;
	}

	.g-foot h2 { font-size: 16px; font-weight: 600; color: #4a505a; }

	.g-ic {
		width: 20px;
		height: 16px;
		fill: none;
		stroke: #42a96e;
		stroke-width: 1.500;
	}

	.label-f {
		height: 56px;
		display: flex;
		align-items: center;
		font-size: 11.500px;
		font-style: italic;
		color: #8d9298;
		padding: 10px 0 0 7px;
		box-sizing: border-box;
	}

	.h-wrap {
		width: 484px;
		background: #e6e8e9;
		border-radius: 0 18px 0 0;
		height: 330px;
	}

	.h {
		width: 469px;
		height: 330px;
		padding: 0 24px 0 21px;
		border-radius: 14px 14px 0 0;
		box-shadow: none;
	}

	.h-head {
		height: 49px;
		display: flex;
		align-items: center;
		justify-content: space-between;
		padding-top: 4px;
		box-sizing: border-box;
		font-size: 11px;
		color: #a5a9ac;
	}

	.h-row {
		display: flex;
		justify-content: space-between;
		align-items: flex-start;
		border-bottom: 1px solid #e9ebec;
		box-sizing: border-box;
	}

	.h-row b {
		display: block;
		font-size: 13px;
		font-weight: 600;
		color: #555b63;
		line-height: 18px;
	}

	.h-row em {
		display: block;
		font-size: 9.500px;
		color: #b3b6b9;
		white-space: nowrap;
	}

	.h-val { text-align: right; }

	.hv {
		font-size: 15px;
		font-weight: 500;
		color: #42a96e;
		display: flex;
		align-items: center;
		justify-content: flex-end;
		gap: 9px;
		line-height: 20px;
		letter-spacing: -0.6px;
		margin-top: 1px;
	}

	.hv.plain { font-size: 11px; color: #8d9298; letter-spacing: 0; }
	.hv.muted { color: #74907f; }

	.hv svg {
		width: 8px;
		height: 13px;
		fill: none;
		stroke: #8d9298;
		stroke-width: 1.300;
		flex-shrink: 0;
	}

	/* right column */
	.i {
		margin-left: 2px;
		width: 405px;
		height: 186px;
		padding: 16px 76px 0 24px;
		border-radius: 14px;
	}

	.i-top {
		display: flex;
		justify-content: space-between;
		height: 18px;
	}

	.i-tr {
		font-size: 11px;
		color: #8d9298;
		margin: 8px -12px 0 0;
		white-space: nowrap;
	}

	.i-line {
		display: flex;
		align-items: flex-end;
		gap: 3px;
		margin-top: 11px;
		height: 14px;
		margin-left: 1px;
	}

	.i-line i {
		flex: 1;
		border-bottom: 1px solid #e9ebec;
	}

	.i-line.two { margin-top: 6px; margin-left: 5px; }
	.i-line.two span { margin-left: 35px; margin-right: -6px; }

	.i-mid {
		display: flex;
		align-items: center;
		margin-top: 16px;
		height: 32px;
	}

	.i-mid strong {
		font-size: 26px;
		font-weight: 600;
		width: 72px;
		letter-spacing: -0.500px;
	}

	.i-mid div { display: flex; flex-direction: column; font-size: 9.500px; }
	.i-mid b { color: #4a505a; }
	.i-mid div span { color: #a5a9ac; margin-top: 5px; margin-left: 2px; white-space: nowrap; }

	.i-mid em {
		margin: 14px -4px 0 auto;
		font-size: 12px;
		color: #9da1a5;
		white-space: nowrap;
		letter-spacing: 0.8px;
	}

	.i-bot {
		display: flex;
		justify-content: space-between;
		margin-top: 14px;
	}

	.i-seven { display: flex; align-items: flex-start; gap: 2px; margin-left: 5px; }

	.i-seven svg {
		fill: none;
		stroke-width: 3;
		margin-top: 0;
	}

	.i-seven strong {
		display: block;
		font-size: 18px;
		font-weight: 600;
		line-height: 22px;
		white-space: nowrap;
		margin-top: 2px;
		letter-spacing: 0;
	}

	.i-seven p {
		font-size: 9.500px;
		color: #a5a9ac;
		display: flex;
		align-items: center;
		margin-top: 2px;
		gap: 6px;
		white-space: nowrap;
	}

	.i-seven p i {
		width: 8px;
		height: 9px;
		background: #e67a2a;
	}

	.i-seven u { color: #ee9a4a; text-decoration: none; }

	.i-r {
		display: flex;
		flex-direction: column;
		align-items: flex-end;
		margin-top: 8px;
		margin-right: -2px;
	}

	.i-r b { font-size: 12px; font-weight: 500; color: #8d9298; white-space: nowrap; }
	.i-r span { font-size: 9.500px; color: #a5a9ac; margin-top: 2px; white-space: nowrap; }

	.r-label {
		height: 63px;
		display: flex;
		align-items: center;
		font-size: 12.500px;
		color: #8d9298;
		padding: 0 0 4px 13px;
		box-sizing: border-box;
	}

	.r-label.hh {
		height: 54px;
		padding: 12px 0 0 11px;
		font-size: 11.500px;
	}

	.j {
		margin-left: 3px;
		width: 400px;
		height: 379px;
		padding-top: 20px;
	}

	.j h3, .j p { margin-left: 26px; }
	.j-sub { font-size: 9px; font-weight: 500; color: #bfc2c6; margin-top: 1px; }
	.j-t { font-size: 10.500px; font-weight: 500; color: #c3c6cb; white-space: nowrap; }
	.j-t.first { margin-top: 27px; letter-spacing: -0.5px; }

	.j-bar {
		height: 15px;
		background: #45ad70;
		margin: 35px 0 0 25px;
		position: relative;
	}

	.j-bar i {
		position: absolute;
		left: 0;
		top: -4px;
		height: 4px;
		width: 79px;
		background: #45ad70;
		clip-path: polygon(0 0, 85% 0, 100% 100%, 0 100%);
	}

	.j-sub.two { margin-top: 9px; color: #8d929a; }

	.j-rowt {
		display: flex;
		margin-top: 24px;
		padding-bottom: 22px;
		margin-left: 25px;
		border-bottom: 1px solid #4b515b;
	}

	.j-rowt p { margin-left: 0; }
	.j-rowt .rt { margin-left: 143px; }

	.j-t.three { margin-top: 29px; margin-left: 25px; }

	.j .chart { margin-top: 13px; }

	.k {
		margin-top: 22px;
		height: 330px;
		width: 420px;
		position: relative;
		padding-top: 19px;
	}

	.k-top {
		display: flex;
		justify-content: space-between;
		font-size: 11px;
		color: #9da1a5;
		padding: 0 77px 0 20px;
		height: 20px;
	}

	.k-top .ico-light { margin-top: -7px; width: 30px; }

	.k-ring {
		margin: -18px 0 0 38px;
		width: 290px;
		height: 290px;
		position: relative;
	}

	.k-ring svg { display: block; }

	.k-center {
		position: absolute;
		inset: 0;
		display: flex;
		flex-direction: column;
		align-items: center;
		justify-content: center;
		font-size: 9.500px;
		color: #a5a9ac;
		padding: 7px 0 0 2px;
		box-sizing: border-box;
	}

	.k-center strong {
		font-size: 34px;
		font-weight: 500;
		color: #3a414d;
		line-height: 40px;
		margin: 3px 0 5px;
		letter-spacing: 0;
	}

	.k-foot {
		display: flex;
		justify-content: space-between;
		padding: 0 77px 0 23px;
		margin-top: -21px;
	}

	.ico-light.lg { width: 26px; height: 20px; }

	.l {
		height: 182px;
		width: 420px;
	}

	.l-top {
		display: flex;
		justify-content: space-between;
		padding: 20px 70px 0 22px;
		height: 38px;
		box-sizing: border-box;
	}

	.l-top .ico-light { width: 16px; margin-right: -4px; }

	.l-tick {
		display: block;
		width: 14px;
		height: 12px;
		margin: 0 0 0 26px;
		fill: none;
		stroke: #4a505a;
		stroke-width: 1.300;
	}

	.l-head {
		margin: 12px 89px 0 19px;
		border-top: 1px solid #e9ebec;
		padding: 25px 0 0 2px;
		display: flex;
		justify-content: space-between;
		font-size: 12px;
	}

	.l-head b { font-weight: 600; color: #555b63; }
	.l-head span { font-size: 10px; color: #a5a9ac; }

	.l-body {
		display: flex;
		margin-top: 8px;
		padding-left: 19px;
	}

	.l-dot {
		width: 56px;
		height: 54px;
		border-radius: 50%;
		background: #d5432f;
		display: flex;
		align-items: center;
		justify-content: center;
		flex-shrink: 0;
	}

	.l-dot i {
		width: 8px;
		height: 9px;
		border: 2px solid #efc67f;
		background: #d5432f;
	}

	.l-a, .l-b { display: flex; flex-direction: column; margin-top: 5px; }

	.l-a { margin-left: 22px; width: 105px; }
	.l-a strong { font-size: 15px; font-weight: 500; color: #f0a460; white-space: nowrap; line-height: 18px; }
	.l-a em, .l-b em { font-size: 9.500px; color: #a5a9ac; margin-top: 7px; white-space: nowrap; }
	.l-b { width: 125px; }
	.l-b span { font-size: 9.500px; color: #a5a9ac; line-height: 18px; white-space: nowrap; }
	.l-b b { color: #555b63; margin-right: 3px; }
	.l-b .ctr { padding-left: 14px; }

	.l-c {
		display: flex;
		flex-direction: column;
		gap: 10px;
		align-items: center;
		width: 12px;
		margin: 4px 0 0 0;
	}

	.l-c .ico-light { width: 14px; height: 14px; }

	.m {
		margin-top: 25px;
		width: 420px;
		height: 90px;
		display: flex;
		padding: 21px 0 0 18px;
	}

	.m-dot {
		width: 54px;
		height: 54px;
		border-radius: 50%;
		background: #3a78de;
		display: flex;
		align-items: center;
		justify-content: center;
		flex-shrink: 0;
	}

	.m-dot svg { width: 20px; height: 18px; }

	.m-a {
		display: flex;
		flex-direction: column;
		margin: -2px 0 0 16px;
		width: 140px;
		white-space: nowrap;
	}

	.m-a b { font-size: 13px; font-weight: 600; color: #4a505a; }
	.m-a span { font-size: 11px; color: #a5a9ac; margin-top: 2px; }
	.m-a em { font-size: 9.500px; color: #a5a9ac; margin-top: 4px; }

	.m-b { width: 112px; white-space: nowrap; margin-top: -1px; }
	.m-b b { font-size: 14px; font-weight: 600; color: #4a505a; display: block; }

	.m-sq {
		display: flex;
		align-items: center;
		margin: 14px 0 0 -26px;
		gap: 26px;
	}

	.m-sq svg {
		width: 38px;
		height: 10px;
		fill: none;
		stroke: #8d9298;
	}

	.m-sq em { font-size: 9.500px; color: #8d9298; }

	.m-c { display: flex; flex-direction: column; margin-left: -6px; }
	.m-c .ico-light { width: 14px; height: 14px; margin-bottom: 20px; }
	.m-c em { font-size: 9px; color: #a5a9ac; }
</style>
